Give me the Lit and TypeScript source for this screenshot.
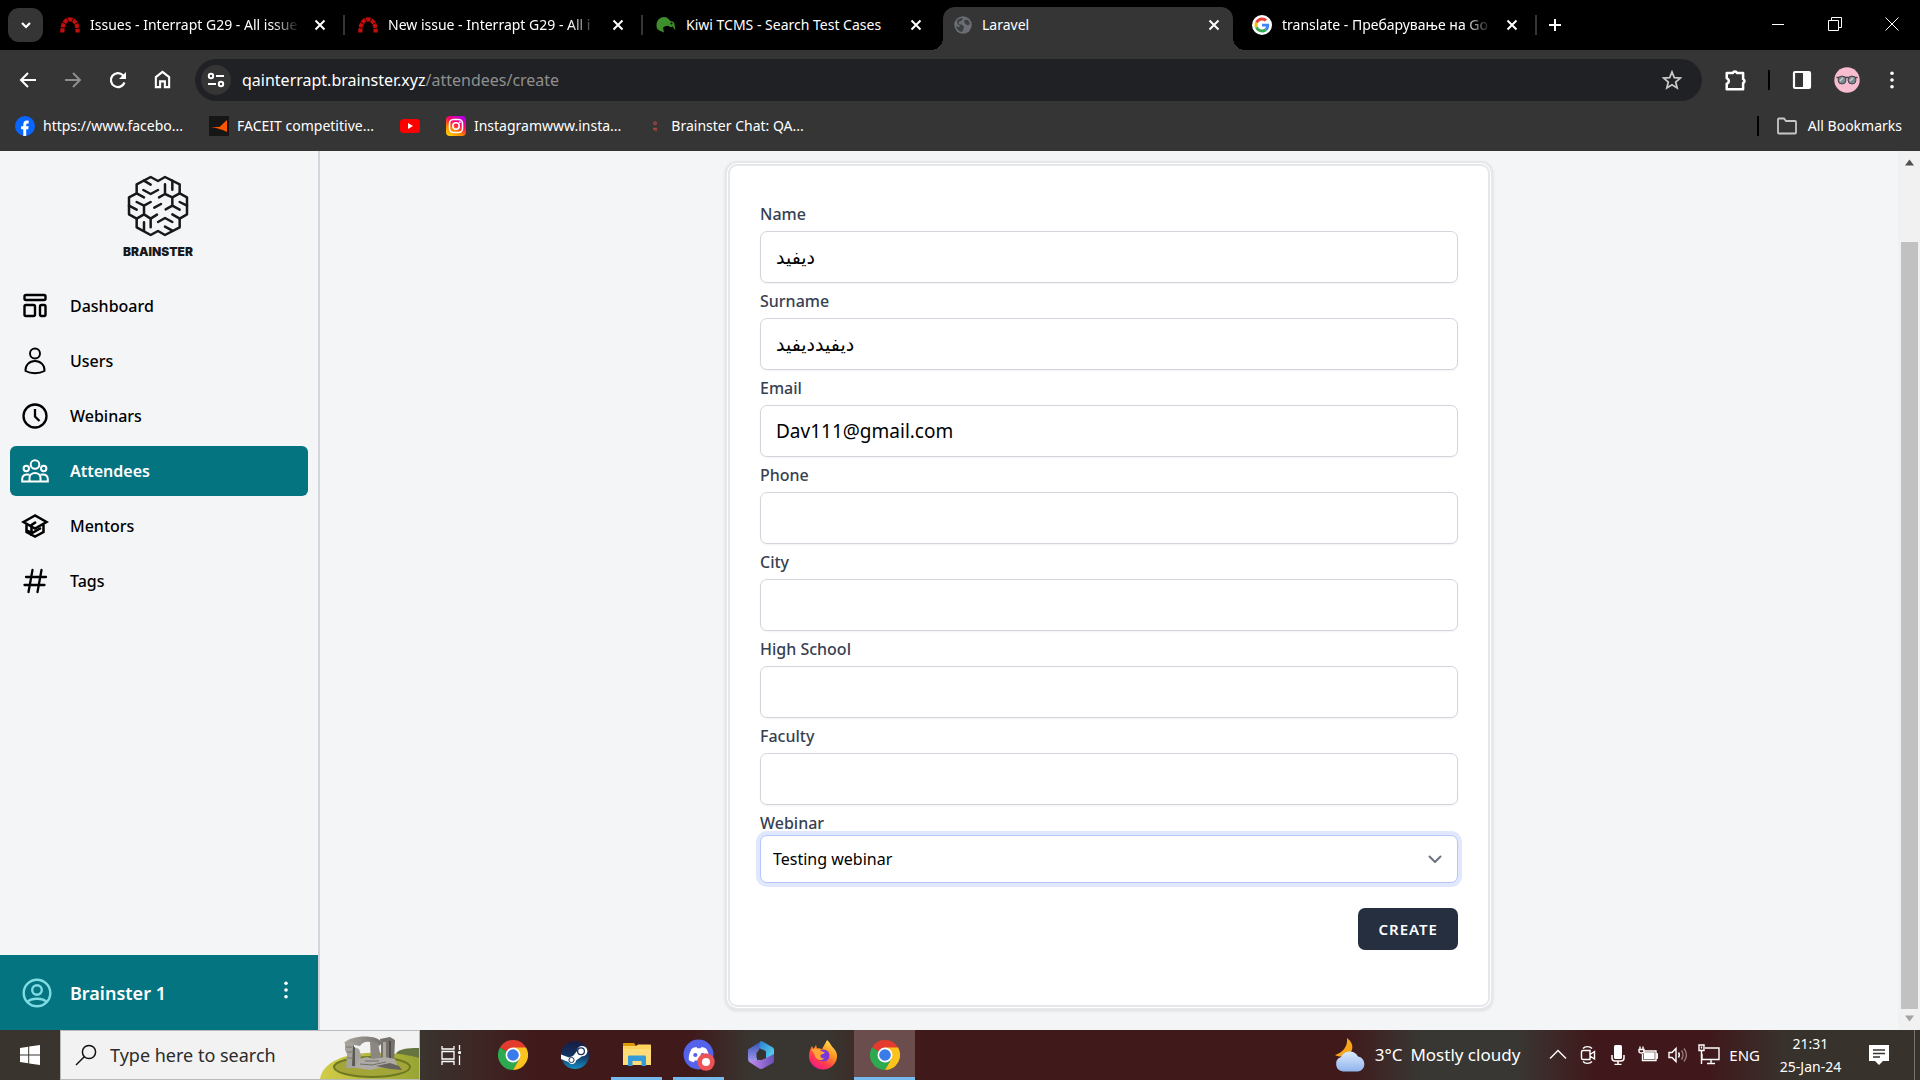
import { LitElement, html, css, svg, type TemplateResult } from "lit";
import { customElement } from "lit/decorators.js";
import { classMap } from "lit/directives/class-map.js";

const icon = (size: number, viewBox: string, body: unknown) =>
  html`<svg width=${size} height=${size} viewBox=${viewBox} fill="none" aria-hidden="true">${body}</svg>`;

/* ---------- browser icons ---------- */
const redmine = icon(20, "0 0 20 20", svg`
  <path d="M2.4 17.5C2 9 5.5 4.400 10 4.400S18 9 17.600 17.500" stroke="#c40d0d" stroke-width="4.200" stroke-dasharray="4.200 0.800"/>
`);
const kiwi = icon(20, "0 0 20 20", svg`
  <path d="M.5 11C.5 5.500 3.500 2 8 2c3 0 4.500 2 6.500 4.200 2.500-.4 4 1.300 4 3.300l1 6-2.800-4c-1.700.8-3.300.4-4.400-.8-2.300.4-4.300.6-5.300 2L8 17.500 4.500 16C2 15.500.5 13.500.5 11z" fill="#3d8f2d"/>
  <circle cx="15.500" cy="8.500" r="1" fill="#000"/>
`);
const globe = icon(18, "0 0 18 18", svg`
  <circle cx="9" cy="9" r="8.700" fill="#6a6e72"/>
  <path d="M3 4.500c2-2 4-2.500 6-2.200L8 4.500l-3 1.300-.3 2.200 3.300.8 2 2-.8 3L8 16c-3-.5-5.500-3-5.800-6l3 1.200L6 9.500 3.500 8zM11 3.500l3.500.8 1.500 4-2.500 1L11 7.500 10 5.500z" fill="#3c3f42"/>
`);
const googleG = icon(20, "0 0 48 48", svg`
  <circle cx="24" cy="24" r="24" fill="#fff"/>
  <g transform="translate(6 6) scale(.75)">
    <path fill="#EA4335" d="M24 9.500c3.540 0 6.710 1.220 9.210 3.600l6.850-6.850C35.900 2.380 30.470 0 24 0 14.620 0 6.510 5.380 2.560 13.220l7.980 6.190C12.430 13.720 17.740 9.500 24 9.500z"/>
    <path fill="#4285F4" d="M46.980 24.550c0-1.570-.15-3.090-.38-4.550H24v9.020h12.940c-.58 2.960-2.260 5.480-4.780 7.180l7.730 6c4.510-4.180 7.090-10.360 7.090-17.650z"/>
    <path fill="#FBBC05" d="M10.530 28.590c-.48-1.450-.76-2.990-.76-4.590s.27-3.140.76-4.590l-7.980-6.190C.92 16.460 0 20.120 0 24c0 3.880.92 7.540 2.560 10.780l7.970-6.190z"/>
    <path fill="#34A853" d="M24 48c6.480 0 11.930-2.130 15.890-5.810l-7.730-6c-2.150 1.450-4.920 2.300-8.160 2.300-6.260 0-11.570-4.220-13.470-9.910l-7.980 6.190C6.510 42.620 14.620 48 24 48z"/>
  </g>
`);
const closeX = icon(12, "0 0 12 12", svg`<path d="M1.500 1.500l9 9M10.500 1.500l-9 9" stroke="#fff" stroke-width="2"/>`);
const plus = icon(14, "0 0 14 14", svg`<path d="M7 1v12M1 7h12" stroke="#fff" stroke-width="2"/>`);
const chevDown = icon(12, "0 0 12 12", svg`<path d="M2 4l4 4 4-4" stroke="#fff" stroke-width="2.200"/>`);
const back = icon(18, "0 0 18 18", svg`<path d="M17 9H2M9 2L2 9l7 7" stroke="#fff" stroke-width="2"/>`);
const forward = icon(18, "0 0 18 18", svg`<path d="M1 9h15M9 2l7 7-7 7" stroke="#8d8d8d" stroke-width="2"/>`);
const reload = icon(18, "0 0 18 18", svg`<path d="M15.500 11.500A7 7 0 1 1 14 4.200L16 6" stroke="#fff" stroke-width="2.200"/><path d="M17 1v7h-7z" fill="#fff"/>`);
const home = icon(19, "0 0 18 20", svg`<path d="M2 18V7.500L9 2l7 5.500V18h-4.500v-6h-5v6z" stroke="#fff" stroke-width="2.200"/>`);
const tune = icon(18, "0 0 18 18", svg`<g stroke="#fff" stroke-width="2"><circle cx="4" cy="5" r="2.200"/><path d="M9 5h8"/><circle cx="14" cy="13" r="2.200"/><path d="M1 13h8"/></g>`);
const star = icon(20, "0 0 20 20", svg`<path d="M10 2l2.300 5.600 6 .5-4.600 3.900 1.400 5.900L10 14.700l-5.100 3.200L6.300 12 1.700 8.100l6-.5z" stroke="#c7c7c7" stroke-width="1.800"/>`);
const puzzle = icon(24, "0 0 22 22", svg`<path d="M2.500 4.500h5.700a1.900 1.900 0 0 1 3.600 0h5.700v5.700a1.900 1.900 0 0 1 0 3.600v5.700h-15v-5a2.600 2.600 0 0 0 0-5z" stroke="#fff" stroke-width="2.300" stroke-linejoin="round"/>`);
const sidePanel = icon(20, "0 0 20 20", svg`<rect x="2" y="2" width="16" height="16" rx="1" stroke="#fff" stroke-width="2.200"/><path d="M11 2h7v16h-7z" fill="#fff"/>`);
const avatar = icon(26, "0 0 26 26", svg`
  <circle cx="13" cy="13" r="12.700" fill="#f7bcd0"/>
  <path d="M2.500 10.500h21" stroke="#4d3b40" stroke-width="1.500"/>
  <circle cx="8" cy="13" r="4" fill="#7c8b90" stroke="#4b4448"/><circle cx="18" cy="13" r="4" fill="#7c8b90" stroke="#4b4448"/>
  <path d="M6 14l3-3M16 14l3-3" stroke="#c9d5d8" stroke-width="1.500"/>
`);
const dots = icon(18, "0 0 20 20", svg`<g fill="#fff"><circle cx="10" cy="2.500" r="2"/><circle cx="10" cy="10" r="2"/><circle cx="10" cy="17.500" r="2"/></g>`);
const facebook = icon(20, "0 0 20 20", svg`<circle cx="10" cy="10" r="10" fill="#0866ff"/><path d="M8.300 20v-6.800H6.100v-3h2.200V8.500c0-2.700 1.300-3.900 3.700-3.900.7 0 1.300.1 1.700.2v2.600h-1.200c-1 0-1.300.6-1.300 1.500v1.300h2.500l-.5 3h-2V20z" fill="#fff"/>`);
const faceit = icon(20, "0 0 20 20", svg`<path d="M0 0h20v20H0z" fill="#161616"/><path d="M18 4v12C13 13.500 8 12 2 11h8.500z" fill="#ff5500"/>`);
const youtube = icon(20, "0 0 20 20", svg`<rect y="3" width="20" height="14" rx="3.500" fill="#f00"/><path d="M8 7l5 3-5 3z" fill="#fff"/>`);
const instagram = icon(20, "0 0 20 20", svg`
  <defs><linearGradient id="ig" x1="3" y1="20" x2="15" y2="0" gradientUnits="userSpaceOnUse"><stop stop-color="#ffd600"/><stop offset=".35" stop-color="#ff7a00"/><stop offset=".65" stop-color="#ff0069"/><stop offset="1" stop-color="#b400e8"/></linearGradient></defs>
  <rect width="20" height="20" rx="4" fill="url(#ig)"/><rect x="3.500" y="3.500" width="13" height="13" rx="4" stroke="#fff" stroke-width="1.600"/><circle cx="10" cy="10" r="3.200" stroke="#fff" stroke-width="1.600"/><circle cx="13.800" cy="6.200" r="1" fill="#fff"/>`);
const chat = icon(16, "0 0 16 20", svg`<circle cx="8" cy="6.500" r="1.700" stroke="#a8443f" stroke-width="1.500"/><path d="M5.500 13h5M6 15l1.500-1 2 1.500 1-1" stroke="#a8443f" stroke-width="1.500"/>`);
const folder = icon(20, "0 0 20 20", svg`<path d="M1 3.500C1 3 1.500 2.500 2 2.500h5l2 2.500h9c.6 0 1 .4 1 1v10.500c0 .6-.4 1-1 1H2c-.6 0-1-.4-1-1z" stroke="#c7c7c7" stroke-width="1.800"/>`);
const winMin = icon(14, "0 0 14 14", svg`<path d="M1 7.500h12" stroke="#fff"/>`);
const winRestore = icon(14, "0 0 14 14", svg`<path d="M.5 3.500h10v10H.5zM3.500 3.500v-3h10v10h-3" stroke="#fff"/>`);
const winClose = icon(14, "0 0 14 14", svg`<path d="M.5.5l13 13M13.500.5l-13 13" stroke="#fff"/>`);

/* ---------- page icons ---------- */
const brain = html`<svg width="62" height="62" viewBox="382 76 186 186" fill="none" aria-hidden="true">
  <g stroke="#16181a" stroke-width="7.500" stroke-linecap="round" stroke-linejoin="round">
    <path d="M453 82L475 94 496 82 540 104V131L562 143V194L540 207V233L496 256 475 244 453 256 411 233V207L388 194V143L411 131V104z"/>
    <path d="M411 131L433 143M433 93L453 105M431 121L453 133 475 121M496 104V133L478 143M518 93V120M496 133L518 143 540 131M518 143V168L498 179M518 168L540 180M540 157L562 168M388 168L411 180M411 157L433 168 453 157M433 168V194L411 207M464 174L484 163M433 194L453 207 472 195M453 207V233M433 218V243M475 217L496 205 518 217M518 194L540 207M496 231L518 243"/>
  </g></svg>`;
const dashboard = icon(28, "0 0 28 28", svg`<g stroke="#000" stroke-width="2.400"><rect x="3.500" y="3" width="21" height="5" rx="1.500"/><rect x="3.500" y="13" width="10.500" height="11" rx="1.500"/><rect x="19" y="13" width="5.500" height="11" rx="1.500"/></g>`);
const user = icon(28, "0 0 28 28", svg`<g stroke="#000" stroke-width="1.900"><circle cx="14" cy="6.500" r="5"/><path d="M4.500 24c-.5-5.500 3.800-10 9.500-10s10 4.500 9.500 10c-3 1.600-6 2.200-9.500 2.200S7.500 25.600 4.500 24z"/></g>`);
const clock = icon(28, "0 0 28 28", svg`<g stroke="#000" stroke-width="2.300"><circle cx="14" cy="14" r="11.500"/><path d="M14 7v7.500l4.500 4.500"/></g>`);
const people = icon(28, "0 0 28 28", svg`<g stroke="#fff" stroke-width="2"><circle cx="14" cy="7.500" r="4.300"/><circle cx="5.300" cy="11.500" r="2.700"/><circle cx="22.700" cy="11.500" r="2.700"/><path d="M8.500 24.500V21c0-3 2.300-5 5.500-5s5.500 2 5.500 5v3.500M8.500 17.800c-4-1.200-7.300.4-7.300 4v2.700h25.600v-2.700c0-3.600-3.300-5.200-7.300-4"/></g>`);
const mentor = icon(28, "0 0 28 28", svg`<g stroke="#000" stroke-width="2.500"><path d="M14 3.500L2.500 10 14 16.500 25.500 10z"/><path d="M5.500 12.500V20L14 24.500 22.500 20V12.500M15 10L10.500 13V24M6 18.500l5 2.500 9-5"/></g>`);
const hash = icon(28, "0 0 28 28", svg`<path d="M11.500 3L7.500 25M20.500 3l-4 22M5 10h20M3.500 18h20" stroke="#000" stroke-width="2.300" stroke-linecap="round"/>`);
const account = icon(30, "0 0 30 30", svg`<g stroke="#7edce2" stroke-width="2.400"><circle cx="15" cy="15" r="13.300"/><circle cx="15" cy="12" r="4.800"/><path d="M5 24.500c4-5 16-5 20 0"/></g>`);
const chevGrey = icon(14, "0 0 14 14", svg`<path d="M1.500 4.500L7 10l5.500-5.500" stroke="#6b7280" stroke-width="2" stroke-linecap="round" stroke-linejoin="round"/>`);

/* ---------- taskbar icons ---------- */
const windows = icon(20, "0 0 20 20", svg`<path d="M0 3l8.200-1.200v7.700H0zM9.200 1.600L20 0v9.500H9.200zM0 10.500h8.200v7.700L0 17zM9.200 10.500H20V20L9.200 18.400z" fill="#fff"/>`);
const search = icon(22, "0 0 22 22", svg`<circle cx="14" cy="8" r="6.600" stroke="#111" stroke-width="1.500"/><path d="M9.500 12.500L1 21" stroke="#111" stroke-width="1.500"/>`);
const ruins = html`<svg width="99" height="48" viewBox="0 0 99 48" fill="none" aria-hidden="true">
  <defs>
    <linearGradient id="hill" x1="0" x2="1"><stop stop-color="#d2cc48"/><stop offset="1" stop-color="#98a533"/></linearGradient>
    <linearGradient id="arch" x1="0" x2="1"><stop stop-color="#a9a69f"/><stop offset="1" stop-color="#77746d"/></linearGradient>
  </defs>
  <path d="M76 22c4-4 10-5 23-5v14H84z" fill="#66753f"/>
  <path d="M0 48C2 34 18 24 46 22c26-1 43 2 53 5v21z" fill="url(#hill)"/>
  <ellipse cx="52" cy="36" rx="38" ry="10" fill="#a3a538" stroke="#6d7823" stroke-width="2"/>
  <path d="M24 12c7-8 34-9 38 0l-3 3-9-4c-5-1-8 1-10 4z" fill="url(#arch)"/>
  <path d="M50 10l8 2 4 20-11-2z" fill="#8b8780"/>
  <path d="M60 8l10-2 5 3-1 22H61V14z" fill="#76726b"/><path d="M63 11h3v17h-3z" fill="#aaa79f"/><path d="M69 10h2v18h-2z" fill="#504d49"/>
  <path d="M25 11l9 1v4l5 2 2 6-1 13H26l1-14-2-4z" fill="#a5a29c"/><path d="M33 14l2 3v18h-3z" fill="#5a5752"/><path d="M26 16h6M27 21h5M27 27h5" stroke="#7b7771"/>
  <path d="M36 34l3-6 8-2 6 2 12-2 10 2 2 6-13 2-14 3-13-2z" fill="#aeaba6"/>
  <path d="M40 33l12 1 14-3M45 30h14" stroke="#716e69"/>
  <path d="M56 35l14-3 9 3 3 4-12-1z" fill="#67645f"/>
</svg>`;
const taskView = icon(20, "0 0 20 20", svg`<g stroke="#fff" stroke-width="1.300"><path d="M1 1v3h12V1M1 6.500h12v7.500H1zM1 20v-3.500h12V20M18.500 0v5M18.500 10.500V20"/></g><circle cx="18.500" cy="7.500" r="1.600" fill="#fff"/>`);
const chrome = icon(30, "0 0 48 48", svg`
  <path d="M24 24L3.200 12A24 24 0 0 1 44.800 12z" fill="#e33b2e"/>
  <path d="M24 24L3.200 12A24 24 0 0 0 24 48L34.400 30z" fill="#2da94f"/>
  <path d="M24 12H44.800A24 24 0 0 1 24 48L34.400 30z" fill="#fcc31e"/>
  <circle cx="24" cy="24" r="12" fill="#fff"/><circle cx="24" cy="24" r="9.300" fill="#3a7bea"/>`);
const steam = icon(28, "0 0 28 28", svg`
  <defs><linearGradient id="st" x2="0" y2="1"><stop stop-color="#171c44"/><stop offset=".5" stop-color="#11335f"/><stop offset="1" stop-color="#168cc2"/></linearGradient></defs>
  <circle cx="14" cy="14" r="14" fill="url(#st)"/>
  <path d="M0 13.500l8 3 4-1.500 4-5a5.200 5.200 0 1 1 5 5.300l-6 4.200a4 4 0 0 1-7.500 1.500L0 18z" fill="#fff"/>
  <circle cx="20" cy="10.300" r="3.400" fill="#fff" stroke="#17345e" stroke-width="1.300"/><circle cx="10.500" cy="19" r="2.600" stroke="#17345e"/>`);
const explorer = icon(30, "0 0 30 30", svg`
  <path d="M1 4c0-.6.4-1 1-1h10l2 3H1z" fill="#dc9a05"/><path d="M1 6h13l2-1.500h12c.6 0 1 .4 1 1V25H1z" fill="#ffd45e"/><path d="M1 9h28v16H1z" fill="#ffdc77"/>
  <path d="M6 26V17c0-1 .6-1.500 1.500-1.500h15c.9 0 1.500.5 1.500 1.500v9h-4.500v-5h-9v5z" fill="#359ad8"/>`);
const discord = icon(32, "0 0 32 32", svg`
  <circle cx="15.500" cy="15.500" r="15" fill="#5562ea"/>
  <path d="M8.500 10c2-1.500 3.500-1.800 5-2l.7 1.200h3.600L18.500 8c1.500.2 3 .5 5 2 2 3.500 3 7 2.700 11-2 1.400-3.500 2-5 2.300l-1-1.800h-8.400l-1 1.800c-1.500-.3-3-.9-5-2.300C5.500 17 6.500 13.500 8.500 10z" fill="#fff"/>
  <circle cx="12.300" cy="16" r="2.100" fill="#5562ea"/><circle cx="19.700" cy="16" r="2.100" fill="#5562ea"/>
  <circle cx="23" cy="23" r="8.700" fill="#ed5356"/><circle cx="23" cy="23" r="4" fill="#fff"/>`);
const m365 = icon(28, "0 0 28 28", svg`
  <defs>
    <linearGradient id="ma" x2="0" y2="1"><stop stop-color="#3352b8"/><stop offset="1" stop-color="#b0a0f0"/></linearGradient>
    <linearGradient id="mb" x2="1" y2="1"><stop stop-color="#2b7fd0"/><stop offset="1" stop-color="#5fe0f5"/></linearGradient>
    <linearGradient id="mc" x2="1"><stop stop-color="#c58df0"/><stop offset="1" stop-color="#6a4fb8"/></linearGradient>
  </defs>
  <path d="M1 8.500L12.500 1.300c2-1.200 4-.8 3 1L10 12v11L3 21c-1.500-.7-2-1.700-2-3z" fill="url(#ma)"/>
  <path d="M13 .5c1-.4 2-.2 3 .3l9.500 5.500c1.200.8 1.500 1.500 1.500 3V20l-8-2v-6.500c0-1-.4-1.500-1.200-2L12 7z" fill="url(#mb)"/>
  <path d="M1.500 20.500L17 18l10-5v7c-.1 1-.5 1.600-1.500 2.200L16 27.500c-1.300.7-2.500.7-3.800 0z" fill="url(#mc)"/>
  <path d="M14 9l4.500 2.700v5L14 19.300l-4.500-2.600v-5z" fill="#35332f"/>`);
const firefox = icon(30, "0 0 30 30", svg`
  <defs><linearGradient id="fx" x1=".9" y1="0" x2=".3" y2="1"><stop stop-color="#fff36a"/><stop offset=".4" stop-color="#ff9a1f"/><stop offset=".75" stop-color="#ff3b4e"/><stop offset="1" stop-color="#f0198c"/></linearGradient></defs>
  <path d="M19 0c3 2.500 3.500 4.500 5 6.500 3 3 5 6 5 9.500A14 13.500 0 0 1 1 16c0-4 1.500-7.500 3-10l1.500 3L8 5l1 3.500c2-.8 4 0 5 1C15.500 6 17 4 19 0z" fill="url(#fx)"/>
  <circle cx="15.500" cy="15.500" r="6" fill="#7a38d8"/><path d="M3.500 9.500c3-2 7-1 9.500 1.500l4 1.500c-1 1.700-3.500 1.500-4.500 2.500-.5 2.500 1.500 4 4 3.500C12 22 7 19 6.500 14z" fill="#ffa436"/>`);
const weather = icon(34, "0 0 34 34", svg`
  <defs><linearGradient id="cl" x2="0" y2="1"><stop stop-color="#dce9fb"/><stop offset="1" stop-color="#8fb4ee"/></linearGradient></defs>
  <path d="M14 0c5 3.500 7 9 4 14-3 4.500-10 6-16 3 7-2 13-8 12-17z" fill="#f8a51c"/>
  <path d="M10 33.500a7.500 7.500 0 0 1-2-14.500A9.500 9.500 0 0 1 25 18.500a7.600 7.600 0 0 1 0 15z" fill="url(#cl)"/>`);
const w = (body: unknown) => icon(20, "0 0 20 20", svg`<g stroke="#fff" stroke-width="1.400">${body}</g>`);
const chevUp = w(svg`<path d="M2 13.500l8-8 8 8"/>`);
const meet = w(svg`<path d="M5 5.500h7v9H5c-1 0-1.500-.5-1.500-1.500v-6C3.500 6 4 5.500 5 5.500zM12 9.500l4.500-3v7.500L12 11M5 3.500C7 1 12 1 14 3.500M5 16.500C7 19 12 19 14 16.500"/>`);
const mic = icon(20, "0 0 20 20", svg`<rect x="6" y="0" width="8" height="14" rx="1.500" fill="#fff"/><path d="M4 10v3c0 2 1.500 3 3 3h6c1.500 0 3-1 3-3v-3M10 16v3.500M6.500 19.500h7" stroke="#fff" stroke-width="1.500"/>`);
const battery = w(svg`<path d="M5.500 6H18v9.500H4.500V9M18.500 9h1v4h-1"/><path d="M6.500 8H16v5.500H6.500z" fill="#fff"/><path d="M1 4.500h5v2c0 2-5 2-5 0zM2 4.500v-3M5 4.500v-3"/>`);
const speaker = w(svg`<path d="M1 7.500h3L8 3.500v13l-4-4H1zM10.500 7.500c1 1.500 1 3.500 0 5"/><path d="M13.500 5.500c2 2.500 2 6.500 0 9M16 3.500c3 4 3 9 0 13" stroke="#96797a"/>`);
const monitor = icon(22, "0 0 22 22", svg`<g stroke="#fff" stroke-width="1.400"><path d="M7 4h14v11.500H4V10M9 19.500h8M13 15.500v4M1 1h5v5.500H1zM3.500 6.500V20M3.500 2.500v2"/></g>`);
const notice = icon(20, "0 0 20 20", svg`<path d="M0 0h20v16h-6l-4 4-4-4H0z" fill="#fff"/><path d="M4 5h12M4 8.500h12M4 12h7" stroke="#3a332e" stroke-width="1.300"/>`);

const sans = css`"Noto Sans", "Open Sans", "DejaVu Sans", sans-serif`;

const base = css`
  *, *::before, *::after { box-sizing: border-box; }
  svg { display: block; flex: none; }
  button { font: inherit; color: inherit; background: none; border: 0; padding: 0; display: flex; align-items: center; justify-content: center; }
  a { color: inherit; text-decoration: none; }
`;

interface Tab { title: string; icon: TemplateResult; active?: boolean; beforeActive?: boolean; fade?: boolean }

@customElement("browser-frame")
export class BrowserFrame extends LitElement {
  static styles = [base, css`
    :host { display: block; background: #353535; color: #fff; font: 14px/20px ${sans}; }
    .strip { display: flex; align-items: flex-end; height: 50px; background: #000; padding-left: 8px; }
    .tab-search { width: 35px; height: 34px; border-radius: 11px; background: #353535; margin: 0 3px 8px 0; }
    .tab { display: flex; align-items: center; gap: 10px; width: 298px; height: 43px; padding: 0 14px 8px 14px; position: relative; }
    .tab.line::after { content: ""; position: absolute; right: -1px; top: 8px; width: 2px; height: 20px; background: #353535; }
    .tab.active::before { content: ""; position: absolute; z-index: 0; inset: 0 5px 0 3px; background: #353535; border-radius: 12px 12px 0 0; }
    .tab > * { position: relative; z-index: 1; }
    .title { flex: 1; min-width: 0; white-space: nowrap; }
    .title.fade { mask-image: linear-gradient(90deg, #000 calc(100% - 28px), transparent); }
    .tab > .foot { position: absolute; bottom: 0; width: 12px; height: 12px; }
    .foot.left { left: -9px; background: radial-gradient(circle at 0 0, #000 12px, #353535 12px); }
    .foot.right { right: -7px; background: radial-gradient(circle at 100% 0, #000 12px, #353535 12px); }
    .close { width: 20px; height: 20px; }
    .new-tab { width: 38px; height: 35px; margin-bottom: 8px; }
    .window { display: flex; margin-left: auto; margin-bottom: 2px; }
    .window button { width: 57px; height: 48px; }
    .toolbar { display: flex; align-items: center; height: 59px; padding: 0 6px 0 5px; }
    .nav { width: 45px; height: 34px; }
    .omnibox { display: flex; align-items: center; gap: 11px; flex: 1; height: 42px; margin-left: 10px; margin-right: 16px; padding: 0 20px 0 6px; border-radius: 21px; background: #202124; }
    .site { width: 30px; height: 30px; border-radius: 15px; background: #353535; }
    .url { flex: 1; font: 16px/24px ${sans}; }
    .path { color: #8f8f8f; }
    .action { width: 45px; height: 34px; }
    .action.narrow { width: 36px; }
    .sep { width: 2px; height: 20px; background: #000; margin: 0 9px 0 14px; }
    .marks { display: flex; align-items: center; gap: 26px; height: 42px; padding: 0 18px 8px 15px; }
    .mark { display: flex; align-items: center; gap: 8px; }
    .mark.all { gap: 11px; }
    .sep.push { margin: 0 -8px 0 auto; }
  `];

  private tabs: Tab[] = [
    { title: "Issues - Interrapt G29 - All issue", icon: redmine, fade: true },
    { title: "New issue - Interrapt G29 - All i", icon: redmine, fade: true },
    { title: "Kiwi TCMS - Search Test Cases", icon: kiwi, beforeActive: true },
    { title: "Laravel", icon: globe, active: true },
    { title: "translate - Пребарување на Go", icon: googleG, fade: true },
  ];

  private marks = [
    { label: "https://www.facebo...", icon: facebook },
    { label: "FACEIT competitive...", icon: faceit },
    { label: "", icon: youtube },
    { label: "Instagramwww.insta...", icon: instagram },
    { label: "Brainster Chat: QA...", icon: chat },
  ];

  render() {
    return html`
      <div class="strip">
        <button class="tab-search" aria-label="Search tabs">${chevDown}</button>
        ${this.tabs.map((t) => html`
          <div class=${classMap({ tab: true, active: !!t.active, line: !t.active && !t.beforeActive })}>
            ${t.icon}<span class=${classMap({ title: true, fade: !!t.fade })}>${t.title}</span>
            <button class="close" aria-label="Close tab">${closeX}</button>
            ${t.active ? html`<i class="foot left"></i><i class="foot right"></i>` : null}
          </div>`)}
        <button class="new-tab" aria-label="New tab">${plus}</button>
        <div class="window">
          <button aria-label="Minimize">${winMin}</button>
          <button aria-label="Restore">${winRestore}</button>
          <button aria-label="Close">${winClose}</button>
        </div>
      </div>
      <div class="toolbar">
        <button class="nav" aria-label="Back">${back}</button>
        <button class="nav" aria-label="Forward">${forward}</button>
        <button class="nav" aria-label="Reload">${reload}</button>
        <button class="nav" aria-label="Home">${home}</button>
        <div class="omnibox">
          <button class="site" aria-label="Site information">${tune}</button>
          <div class="url" role="textbox" aria-label="Address" tabindex="0">qainterrapt.brainster.xyz<span class="path">/attendees/create</span></div>
          <button aria-label="Bookmark this tab">${star}</button>
        </div>
        <button class="action narrow" aria-label="Extensions">${puzzle}</button>
        <span class="sep"></span>
        <button class="action" aria-label="Side panel">${sidePanel}</button>
        <button class="action" aria-label="Profile">${avatar}</button>
        <button class="action" aria-label="Menu">${dots}</button>
      </div>
      <nav class="marks" aria-label="Bookmarks">
        ${this.marks.map((m) => html`<a class="mark" href="#" aria-label=${m.label || "YouTube"}>${m.icon}${m.label || null}</a>`)}
        <span class="sep push"></span>
        <a class="mark all" href="#">${folder}All Bookmarks</a>
      </nav>`;
  }
}

@customElement("side-menu")
export class SideMenu extends LitElement {
  static styles = [base, css`
    :host { display: flex; flex-direction: column; border-right: 2px solid #d2d6dc; background: #f4f5f7; color: #000; font: 16px/24px ${sans}; }
    .brand { display: flex; flex-direction: column; align-items: center; gap: 7px; padding: 24px 2px 21px 0; font: 900 12px/16px Inter, Lato, sans-serif; color: #16181a; }
    .menu { display: flex; flex-direction: column; gap: 5px; padding: 0 10px; }
    .item { display: flex; align-items: center; gap: 21px; height: 50px; padding: 0 11px; border-radius: 6px; font-weight: 500; }
    .item.on { background: #047481; color: #fff; font-weight: 600; }
    .foot { display: flex; align-items: center; gap: 18px; height: 75px; margin-top: auto; padding: 0 23px 0 22px; background: #047481; color: #fff; font-size: 18px; font-weight: 600; }
    .more { margin-left: auto; padding-bottom: 5px; }
  `];

  private items = [
    { label: "Dashboard", icon: dashboard },
    { label: "Users", icon: user },
    { label: "Webinars", icon: clock },
    { label: "Attendees", icon: people, on: true },
    { label: "Mentors", icon: mentor },
    { label: "Tags", icon: hash },
  ];

  render() {
    return html`
      <div class="brand">${brain}<span>BRAINSTER</span></div>
      <nav class="menu">
        ${this.items.map((i) => html`<a href="#" class=${classMap({ item: true, on: !!i.on })}>${i.icon}<span>${i.label}</span></a>`)}
      </nav>
      <div class="foot">${account}<span>Brainster 1</span>
        <button class="more" aria-label="Account menu">${dots}</button>
      </div>`;
  }
}

@customElement("attendee-form")
export class AttendeeForm extends LitElement {
  static styles = [base, css`
    :host { display: block; flex: 1; min-width: 0; overflow: hidden; background: #f4f5f7; padding: 10px 20px 0; font: 16px/24px ${sans}; }
    .card { max-width: 768px; margin: 0 auto; padding: 30px 30px 55px; background: #fff; border: 5px double #e5e7eb; border-radius: 12px; box-shadow: 0 1px 3px #0000001a; }
    .label { display: block; padding-top: 6px; color: #374151; font-weight: 500; }
    .text, .select { display: block; width: 100%; color: #000; background: #fff; border: 1px solid #d2d6dc; border-radius: 7px; outline: 0; }
    .text { height: 52px; margin-top: 5px; padding: 0 15px; font: 19px/28px ${sans}; box-shadow: 0 1px 2px #0000000d; }
    .wrap { display: grid; align-items: center; }
    .wrap > * { grid-area: 1 / 1; }
    .wrap > svg { justify-self: end; margin-right: 16px; pointer-events: none; }
    .select { appearance: none; height: 48px; padding: 0 12px; font: 16px/24px ${sans}; border-color: #b4c6fc; box-shadow: 0 0 0 4px #e1e7fd; }
    .actions { display: flex; justify-content: flex-end; padding-top: 25px; }
    .create { height: 42px; padding: 0 20px; border-radius: 7px; background: #252f3f; color: #fff; font-size: 15px; font-weight: 600; letter-spacing: 1px; }
  `];

  private fields = [
    ["Name", "ديفيد"], ["Surname", "ديفيدديفيد"], ["Email", "Dav111@gmail.com"],
    ["Phone", ""], ["City", ""], ["High School", ""], ["Faculty", ""],
  ];

  render() {
    return html`
      <form class="card" @submit=${(e: Event) => e.preventDefault()}>
        ${this.fields.map(([label, value], i) => html`
          <label class="label" for="field-${i}">${label}</label>
          <input class="text" id="field-${i}" type="text" .value=${value}>`)}
        <label class="label" for="webinar">Webinar</label>
        <div class="wrap">
          <select class="select" id="webinar"><option>Testing webinar</option></select>
          ${chevGrey}
        </div>
        <div class="actions"><button class="create">CREATE</button></div>
      </form>`;
  }
}

@customElement("page-scrollbar")
export class PageScrollbar extends LitElement {
  static styles = [base, css`
    :host { display: flex; flex-direction: column; align-items: center; width: 22px; background: #f1f1f1; padding: 7px 0; }
    .thumb { width: 17px; flex: 1; margin: 75px 0 5px; background: #c1c1c1; }
  `];
  render() {
    return html`
      ${icon(9, "0 0 9 6", svg`<path d="M0 6L4.500 0 9 6z" fill="#505050"/>`)}
      <div class="thumb"></div>
      ${icon(9, "0 0 9 6", svg`<path d="M0 0l4.500 6L9 0z" fill="#a3a3a3"/>`)}`;
  }
}

@customElement("task-bar")
export class TaskBar extends LitElement {
  static styles = [base, css`
    :host { display: flex; align-items: stretch; height: 50px; color: #fff; font: 14px/20px ${sans};
      background: linear-gradient(90deg, #39342e 0%, #3a332e 22%, #40191b 28%, #40191b 36%, #393530 39%, #393530 43%, #40191b 48%, #40191b 70%, #393733 74%, #393733 79%, #40181b 83%, #40181b 89%, #38322d 93%, #38322d 100%); }
    .start { width: 60px; }
    .search { display: flex; align-items: center; gap: 13px; width: 360px; padding-left: 14px; background: #f2f2f2; border: 1px solid #b9b9b9; overflow: hidden; }
    .query { flex: 1; width: 0; border: 0; padding: 0; outline: 0; background: none; font: 18px/24px ${sans}; }
    .query::placeholder { color: #2b2b2b; opacity: 1; }
    .apps { display: flex; gap: 1px; }
    .app { width: 61px; border-bottom: 3px solid transparent; padding-top: 3px; }
    .app.open { background: linear-gradient(#76b9ed, #76b9ed) bottom / 51px 3px no-repeat border-box; }
    .app.current { background: #6b4d4d; border-bottom-color: #76b9ed; }
    .tray { display: flex; align-items: center; margin-left: auto; }
    .weather { gap: 8px; font-size: 17px; margin-right: 28px; }
    .icons { display: flex; align-items: center; gap: 10px; }
    .lang { font-size: 15px; margin-left: 9px; }
    .time { display: flex; flex-direction: column; align-items: center; width: 101px; line-height: 23px; }
    .notice { width: 36px; }
    .edge { width: 1px; height: 50px; background: #77726d; margin: 0 5px 0 17px; }
  `];

  private apps = [
    { name: "Task View", icon: taskView }, { name: "Chrome", icon: chrome }, { name: "Steam", icon: steam },
    { name: "File Explorer", icon: explorer, open: true }, { name: "Discord", icon: discord, open: true },
    { name: "Microsoft 365", icon: m365 }, { name: "Firefox", icon: firefox },
    { name: "Chrome window", icon: chrome, current: true },
  ];

  render() {
    return html`
      <button class="start" aria-label="Start">${windows}</button>
      <div class="search">${search}<input class="query" aria-label="Search" placeholder="Type here to search">${ruins}</div>
      <div class="apps">
        ${this.apps.map((a) => html`<button class=${classMap({ app: true, open: !!a.open, current: !!a.current })} aria-label=${a.name}>${a.icon}</button>`)}
      </div>
      <div class="tray">
        <button class="weather">${weather}<span>3°C</span><span>Mostly cloudy</span></button>
        <div class="icons">${chevUp}${meet}${mic}${battery}${speaker}${monitor}</div>
        <span class="lang">ENG</span>
        <div class="time"><span>21:31</span><span>25-Jan-24</span></div>
        <button class="notice" aria-label="Notifications">${notice}</button>
        <span class="edge"></span>
      </div>`;
  }
}

@customElement("app-root")
export class AppRoot extends LitElement {
  static styles = css`
    :host { display: flex; flex-direction: column; height: 100vh; overflow: hidden; }
    .page { display: flex; flex: 1; min-height: 0; }
    .side { flex: none; width: 320px; box-sizing: border-box; }
    .scroll { flex: none; box-sizing: border-box; }
  `;
  render() {
    return html`
      <browser-frame></browser-frame>
      <div class="page">
        <side-menu class="side"></side-menu>
        <attendee-form></attendee-form>
        <page-scrollbar class="scroll"></page-scrollbar>
      </div>
      <task-bar></task-bar>`;
  }
}
